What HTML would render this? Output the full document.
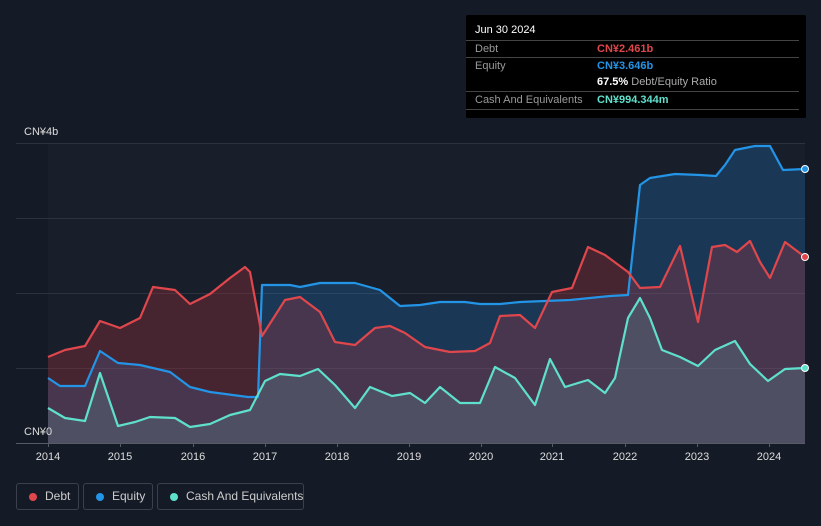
<!DOCTYPE html>
<html><head><meta charset="utf-8"><style>
body{margin:0;background:#151b26;width:821px;height:526px;overflow:hidden;font-family:"Liberation Sans",sans-serif;}
.tt{position:absolute;left:466px;top:15px;width:340px;height:103px;background:#000;border-radius:2px;}
.tt .h{position:absolute;left:9px;top:9px;color:#fff;font-size:11px;}
.row{position:absolute;left:0;width:333px;border-top:1px solid #444;font-size:11px;height:17px;}
.row .l{position:absolute;left:9px;top:2px;color:#999;}
.row .v{position:absolute;left:131px;top:2px;font-weight:bold;}
.lg{position:absolute;top:483px;height:27px;border:1px solid #3a414c;border-radius:3px;color:#ccc;font-size:12px;line-height:25px;box-sizing:border-box;white-space:nowrap;}
.lg i{position:absolute;top:9px;width:8px;height:8px;border-radius:50%;}
</style></head><body>
<svg width="821" height="526" style="position:absolute;left:0;top:0">
<rect x="48" y="143" width="757" height="300" fill="#181f2b"/>
<g stroke="#2c333e" stroke-width="1">
<line x1="16" y1="143.5" x2="805" y2="143.5"/><line x1="16" y1="218.5" x2="805" y2="218.5"/>
<line x1="16" y1="293.5" x2="805" y2="293.5"/><line x1="16" y1="368.5" x2="805" y2="368.5"/>
</g>
<polygon fill="rgba(33,130,210,0.25)" points="48,443 48,378 60,386 85,386 100,351 118,363 140,365 170,372 190,387 210,392 248,397 258,397 262,285 290,285 300,287 320,283 355,283 380,290 400,306 420,305 440,302 465,302 480,304 500,304 520,302 545,301 570,300 590,298 610,296 628,295 640,185 650,178 675,174 700,175 716,176 725,165 735,150 755,146 770,146 783,170 805,169 805,443"/>
<polygon fill="rgba(190,50,60,0.28)" points="48,443 48,357 65,350 85,346 100,321 120,328 140,318 153,287 175,290 190,304 210,294 230,278 245,267 250,272 262,336 285,300 300,297 320,312 335,342 355,345 375,328 390,326 405,333 425,347 450,352 475,351 490,343 500,316 520,315 535,328 552,292 572,288 588,247 605,255 628,272 640,288 660,287 680,246 698,322 712,247 725,245 737,252 750,241 760,262 770,278 785,242 805,257 805,443"/>
<polygon fill="rgba(100,140,150,0.3)" points="48,443 48,408 65,418 85,421 100,373 118,426 135,422 150,417 175,418 190,427 210,424 230,415 250,410 265,381 280,374 300,376 318,369 335,385 355,408 370,387 392,396 410,393 425,403 440,387 460,403 480,403 495,367 515,378 535,405 550,359 565,387 588,380 605,393 615,378 628,318 640,298 650,318 662,350 680,357 698,366 715,350 735,341 750,364 768,381 785,369 805,368 805,443"/>
<g fill="none" stroke-width="2.2" stroke-linejoin="round">
<polyline stroke="#2394e6" points="48,378 60,386 85,386 100,351 118,363 140,365 170,372 190,387 210,392 248,397 258,397 262,285 290,285 300,287 320,283 355,283 380,290 400,306 420,305 440,302 465,302 480,304 500,304 520,302 545,301 570,300 590,298 610,296 628,295 640,185 650,178 675,174 700,175 716,176 725,165 735,150 755,146 770,146 783,170 805,169"/>
<polyline stroke="#e0474c" points="48,357 65,350 85,346 100,321 120,328 140,318 153,287 175,290 190,304 210,294 230,278 245,267 250,272 262,336 285,300 300,297 320,312 335,342 355,345 375,328 390,326 405,333 425,347 450,352 475,351 490,343 500,316 520,315 535,328 552,292 572,288 588,247 605,255 628,272 640,288 660,287 680,246 698,322 712,247 725,245 737,252 750,241 760,262 770,278 785,242 805,257"/>
<polyline stroke="#5fe0cc" points="48,408 65,418 85,421 100,373 118,426 135,422 150,417 175,418 190,427 210,424 230,415 250,410 265,381 280,374 300,376 318,369 335,385 355,408 370,387 392,396 410,393 425,403 440,387 460,403 480,403 495,367 515,378 535,405 550,359 565,387 588,380 605,393 615,378 628,318 640,298 650,318 662,350 680,357 698,366 715,350 735,341 750,364 768,381 785,369 805,368"/>
</g>
<circle cx="805" cy="169" r="3.5" fill="#2394e6" stroke="#fff" stroke-width="1"/>
<circle cx="805" cy="257" r="3.5" fill="#e0474c" stroke="#fff" stroke-width="1"/>
<circle cx="805" cy="368" r="3.5" fill="#5fe0cc" stroke="#fff" stroke-width="1"/>
<line x1="16" y1="443.5" x2="805" y2="443.5" stroke="#555c66"/>
<g stroke="#555c66"><line x1="48.5" y1="443" x2="48.5" y2="447"/><line x1="120.5" y1="443" x2="120.5" y2="447"/><line x1="193.5" y1="443" x2="193.5" y2="447"/><line x1="265.5" y1="443" x2="265.5" y2="447"/><line x1="337.5" y1="443" x2="337.5" y2="447"/><line x1="409.5" y1="443" x2="409.5" y2="447"/><line x1="481.5" y1="443" x2="481.5" y2="447"/><line x1="552.5" y1="443" x2="552.5" y2="447"/><line x1="625.5" y1="443" x2="625.5" y2="447"/><line x1="697.5" y1="443" x2="697.5" y2="447"/><line x1="769.5" y1="443" x2="769.5" y2="447"/></g>
<g fill="#ddd" font-size="11" text-anchor="middle" font-family="Liberation Sans">
<text x="48" y="460">2014</text><text x="120" y="460">2015</text><text x="193" y="460">2016</text><text x="265" y="460">2017</text><text x="337" y="460">2018</text><text x="409" y="460">2019</text><text x="481" y="460">2020</text><text x="552" y="460">2021</text><text x="625" y="460">2022</text><text x="697" y="460">2023</text><text x="769" y="460">2024</text>
</g>
<text x="24" y="135" fill="#ddd" font-size="11" font-family="Liberation Sans">CN¥4b</text>
<text x="24" y="435" fill="#ddd" font-size="11" font-family="Liberation Sans">CN¥0</text>
</svg>
<div class="tt">
<div class="h">Jun 30 2024</div>
<div class="row" style="top:25px"><span class="l">Debt</span><span class="v" style="color:#e0474c">CN¥2.461b</span></div>
<div class="row" style="top:42px"><span class="l">Equity</span><span class="v" style="color:#2394e6">CN¥3.646b</span></div>
<div class="row" style="top:59px;border-top:none"><span class="v" style="color:#fff">67.5% <span style="color:#aaa;font-weight:normal">Debt/Equity Ratio</span></span></div>
<div class="row" style="top:76px"><span class="l">Cash And Equivalents</span><span class="v" style="color:#5fe0cc">CN¥994.344m</span></div>
<div class="row" style="top:94px;height:0"></div>
</div>
<div class="lg" style="left:16px;width:63px"><i style="left:12px;background:#e0474c"></i><span style="position:absolute;left:28px">Debt</span></div>
<div class="lg" style="left:83px;width:70px"><i style="left:12px;background:#2394e6"></i><span style="position:absolute;left:28px">Equity</span></div>
<div class="lg" style="left:157px;width:147px"><i style="left:12px;background:#5fe0cc"></i><span style="position:absolute;left:28px">Cash And Equivalents</span></div>
</body></html>
